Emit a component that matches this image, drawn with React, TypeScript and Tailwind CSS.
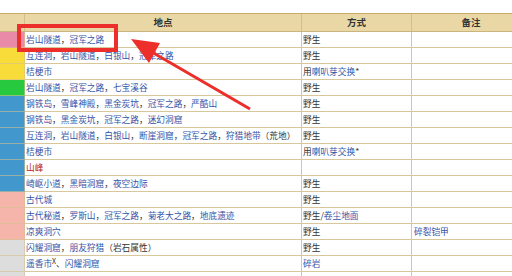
import React from "react";

type Part = { t: string; link?: boolean; red?: boolean; sup?: string };
type Row = { color: string; place: Part[]; method: Part[]; note?: Part[] };

const L = (t: string): Part => ({ t, link: true });
const P = (t: string): Part => ({ t });
const C = "，";

const rows: Row[] = [
  { color: "bg-[#e98aa9]", place: [L("岩山隧道"), P(C), L("冠军之路")], method: [P("野生")] },
  { color: "bg-[#f7dc3a]", place: [L("互连洞"), P(C), L("岩山隧道"), P(C), L("白银山"), P(C), L("冠军之路")], method: [P("野生")] },
  { color: "bg-[#f7dc3a]", place: [L("桔梗市")], method: [P("用"), L("喇叭芽交换"), P("*")] },
  { color: "bg-[#27c93f]", place: [L("岩山隧道"), P(C), L("冠军之路"), P(C), L("七宝溪谷")], method: [P("野生")] },
  { color: "bg-[#4297cc]", place: [L("钢铁岛"), P(C), L("雪峰神殿"), P(C), L("黑金炭坑"), P(C), L("冠军之路"), P(C), L("严酷山")], method: [P("野生")] },
  { color: "bg-[#4297cc]", place: [L("钢铁岛"), P(C), L("黑金炭坑"), P(C), L("冠军之路"), P(C), L("迷幻洞窟")], method: [P("野生")] },
  { color: "bg-[#4297cc]", place: [L("互连洞"), P(C), L("岩山隧道"), P(C), L("白银山"), P(C), L("断崖洞窟"), P(C), L("冠军之路"), P(C), L("狩猎地带"), P("（荒地）")], method: [P("野生")] },
  { color: "bg-[#4297cc]", place: [L("桔梗市")], method: [P("用"), L("喇叭芽交换"), P("*")] },
  { color: "bg-[#4297cc]", place: [{ t: "山峰", red: true }], method: [] },
  { color: "bg-[#4297cc]", place: [L("崎岖小道"), P(C), L("黑暗洞窟"), P(C), L("夜空边际")], method: [P("野生")] },
  { color: "bg-[#f5b5ab]", place: [L("古代城")], method: [P("野生")] },
  { color: "bg-[#f5b5ab]", place: [L("古代秘道"), P(C), L("罗斯山"), P(C), L("冠军之路"), P(C), L("菊老大之路"), P(C), L("地底遗迹")], method: [P("野生/"), L("卷尘地面")] },
  { color: "bg-[#f5b5ab]", place: [L("凉爽洞穴")], method: [P("野生")], note: [L("碎裂铠甲")] },
  { color: "bg-[#dddddd]", place: [L("闪耀洞窟"), P(C), L("朋友狩猎"), P("（岩石属性）")], method: [P("野生")] },
  { color: "bg-[#dddddd]", place: [{ t: "遥香市", link: true, sup: "X" }, P("、"), L("闪耀洞窟")], method: [L("碎岩")] },
  { color: "bg-[#dddddd]", place: [], method: [] },
];

function Text({ parts }: { parts: Part[] }) {
  return (
    <>
      {parts.map((p, i) => (
        <span
          key={i}
          className={p.red ? "text-[#ba1f1f]" : p.link ? "text-[#3353a8]" : "text-[#333]"}
        >
          {p.t}
          {p.sup && <sup className="text-[7px] text-[#333] leading-none">{p.sup}</sup>}
        </span>
      ))}
    </>
  );
}

export default function App() {
  return (
    <div
      className="relative w-[512px] h-[276px] overflow-hidden bg-white pt-[13px]"
      style={{ fontFamily: '"Noto Sans CJK SC", "Noto Sans", sans-serif' }}
    >
      <div className="w-[530px] border-t border-[#c5a965] text-[8.7px]">
        <div className="grid grid-cols-[25px_277px_110px_118px] h-[18px] bg-[#e9d8a5] font-bold text-[9.5px] text-[#333] border-b border-[#cbb57e]">
          <div className="border-r border-[#d4bf8a]" />
          <div className="border-r border-[#d4bf8a] flex items-center justify-center">地点</div>
          <div className="border-r border-[#d4bf8a] flex items-center justify-center">方式</div>
          <div className="flex items-center justify-center">备注</div>
        </div>
        {rows.map((r, i) => (
          <div key={i} className="grid grid-cols-[25px_277px_110px_118px] h-[16px] leading-[15px]">
            <div className={`${r.color} border-r border-b border-[#d4c28f]/60`} />
            <div className="border-r border-b border-[#d8c79a] pl-[1px] whitespace-nowrap overflow-hidden">
              <Text parts={r.place} />
            </div>
            <div className="border-r border-b border-[#d8c79a] pl-[1px] whitespace-nowrap overflow-hidden">
              <Text parts={r.method} />
            </div>
            <div className="border-b border-[#d8c79a] pl-[2px] whitespace-nowrap overflow-hidden">
              {r.note && <Text parts={r.note} />}
            </div>
          </div>
        ))}
      </div>

      <div className="absolute left-[17px] top-[24px] w-[101px] h-[28px] border-[4px] border-[#ec2f2a]" />
      <svg className="absolute left-0 top-0" width="512" height="276" viewBox="0 0 512 276">
        <line x1="250" y1="109" x2="150" y2="51" stroke="#ec2f2a" strokeWidth="3" />
        <polygon points="131,39 160,43 149,63" fill="#ec2f2a" />
      </svg>
    </div>
  );
}
